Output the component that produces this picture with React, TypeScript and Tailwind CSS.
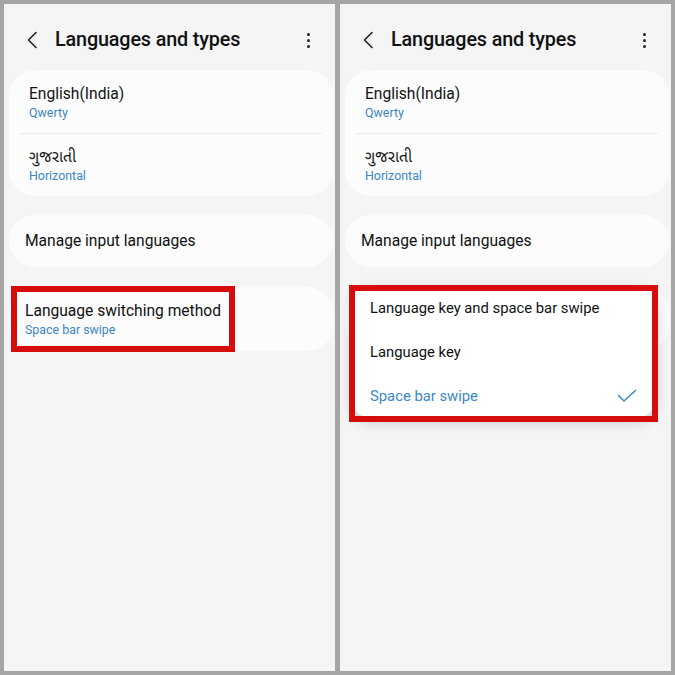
export default function App() {
  return (
    <div className="w-[675px] h-[675px] bg-[#a5a5a5] p-[4px] flex gap-[5px] font-['Roboto','Noto_Sans','Noto_Sans_Gujarati',sans-serif] text-[#111]">
      <Panel popup={false} />
      <Panel popup />
    </div>
  )
}

function Header() {
  return (
    <div className="mt-[22px] mb-[16px] h-[28px] flex items-center">
      <svg className="ml-[22px] w-[12px] h-[18px]" viewBox="0 0 12 18" fill="none">
        <path d="M10 1.5 L2.5 9 L10 16.5" stroke="#222" strokeWidth="1.6" strokeLinecap="round" strokeLinejoin="round" />
      </svg>
      <div className="ml-[17px] text-[19.8px] font-medium tracking-[-0.15px]">Languages and types</div>
      <div className="ml-auto mr-[25px] flex flex-col gap-[3px]">
        <span className="w-[3px] h-[3px] rounded-full bg-[#222]" />
        <span className="w-[3px] h-[3px] rounded-full bg-[#222]" />
        <span className="w-[3px] h-[3px] rounded-full bg-[#222]" />
      </div>
    </div>
  )
}

function Panel({ popup }: { popup: boolean }) {
  return (
    <div className="relative w-[331px] h-full bg-[#f5f5f5] flex flex-col">
      <Header />

      <div className="ml-[5px] mr-[2px] rounded-[26px] bg-[#fcfcfc]">
        <div className="px-[20px] pt-[14px] pb-[11px] flex flex-col">
          <div className="text-[15.6px] leading-[20px]">English(India)</div>
          <div className="text-[12.4px] leading-[18px] text-[#3b87c4]">Qwerty</div>
        </div>
        <div className="mx-[11px] h-px bg-[#ebebeb]" />
        <div className="px-[20px] pt-[13px] pb-[11px] flex flex-col">
          <div className="text-[15.6px] leading-[20px]">ગુજરાતી</div>
          <div className="text-[12.4px] leading-[18px] text-[#3b87c4]">Horizontal</div>
        </div>
      </div>

      <div className="mt-[19px] ml-[5px] mr-[2px] h-[52px] rounded-[26px] bg-[#fcfcfc] flex items-center px-[16px]">
        <div className="text-[15.6px] pt-[2px]">Manage input languages</div>
      </div>

      <div className="mt-[20px] ml-[5px] mr-[2px] h-[64px] rounded-[26px] bg-[#fcfcfc] px-[16px] pt-[14px]">
        {!popup && (
          <>
            <div className="text-[15.6px] leading-[20px]">Language switching method</div>
            <div className="text-[12.4px] leading-[18px] text-[#3b87c4]">Space bar swipe</div>
          </>
        )}
      </div>

      {!popup && (
        <div className="absolute left-[7px] top-[282px] w-[224px] h-[66px] border-[6px] border-[#d70c0c]" />
      )}

      {popup && (
        <>
          <div className="absolute left-[11px] top-[282px] w-[305px] bg-white rounded-[20px] shadow-[0_4px_14px_rgba(0,0,0,0.18)] flex flex-col">
            <div className="h-[44px] flex items-center pl-[19px] text-[14.8px]">Language key and space bar swipe</div>
            <div className="h-[44px] flex items-center pl-[19px] text-[14.8px]">Language key</div>
            <div className="h-[44px] flex items-center pl-[19px] pr-[19px] text-[14.8px] text-[#3b87c4]">
              <span>Space bar swipe</span>
              <svg className="ml-auto w-[20px] h-[14px]" viewBox="0 0 20 14" fill="none">
                <path d="M1.5 6.5 L7 12 L18.5 1.5" stroke="#3b87c4" strokeWidth="1.5" strokeLinecap="round" strokeLinejoin="round" />
              </svg>
            </div>
          </div>
          <div className="absolute left-[9px] top-[281px] w-[309px] h-[137px] border-[6px] border-[#d70c0c]" />
        </>
      )}
    </div>
  )
}
